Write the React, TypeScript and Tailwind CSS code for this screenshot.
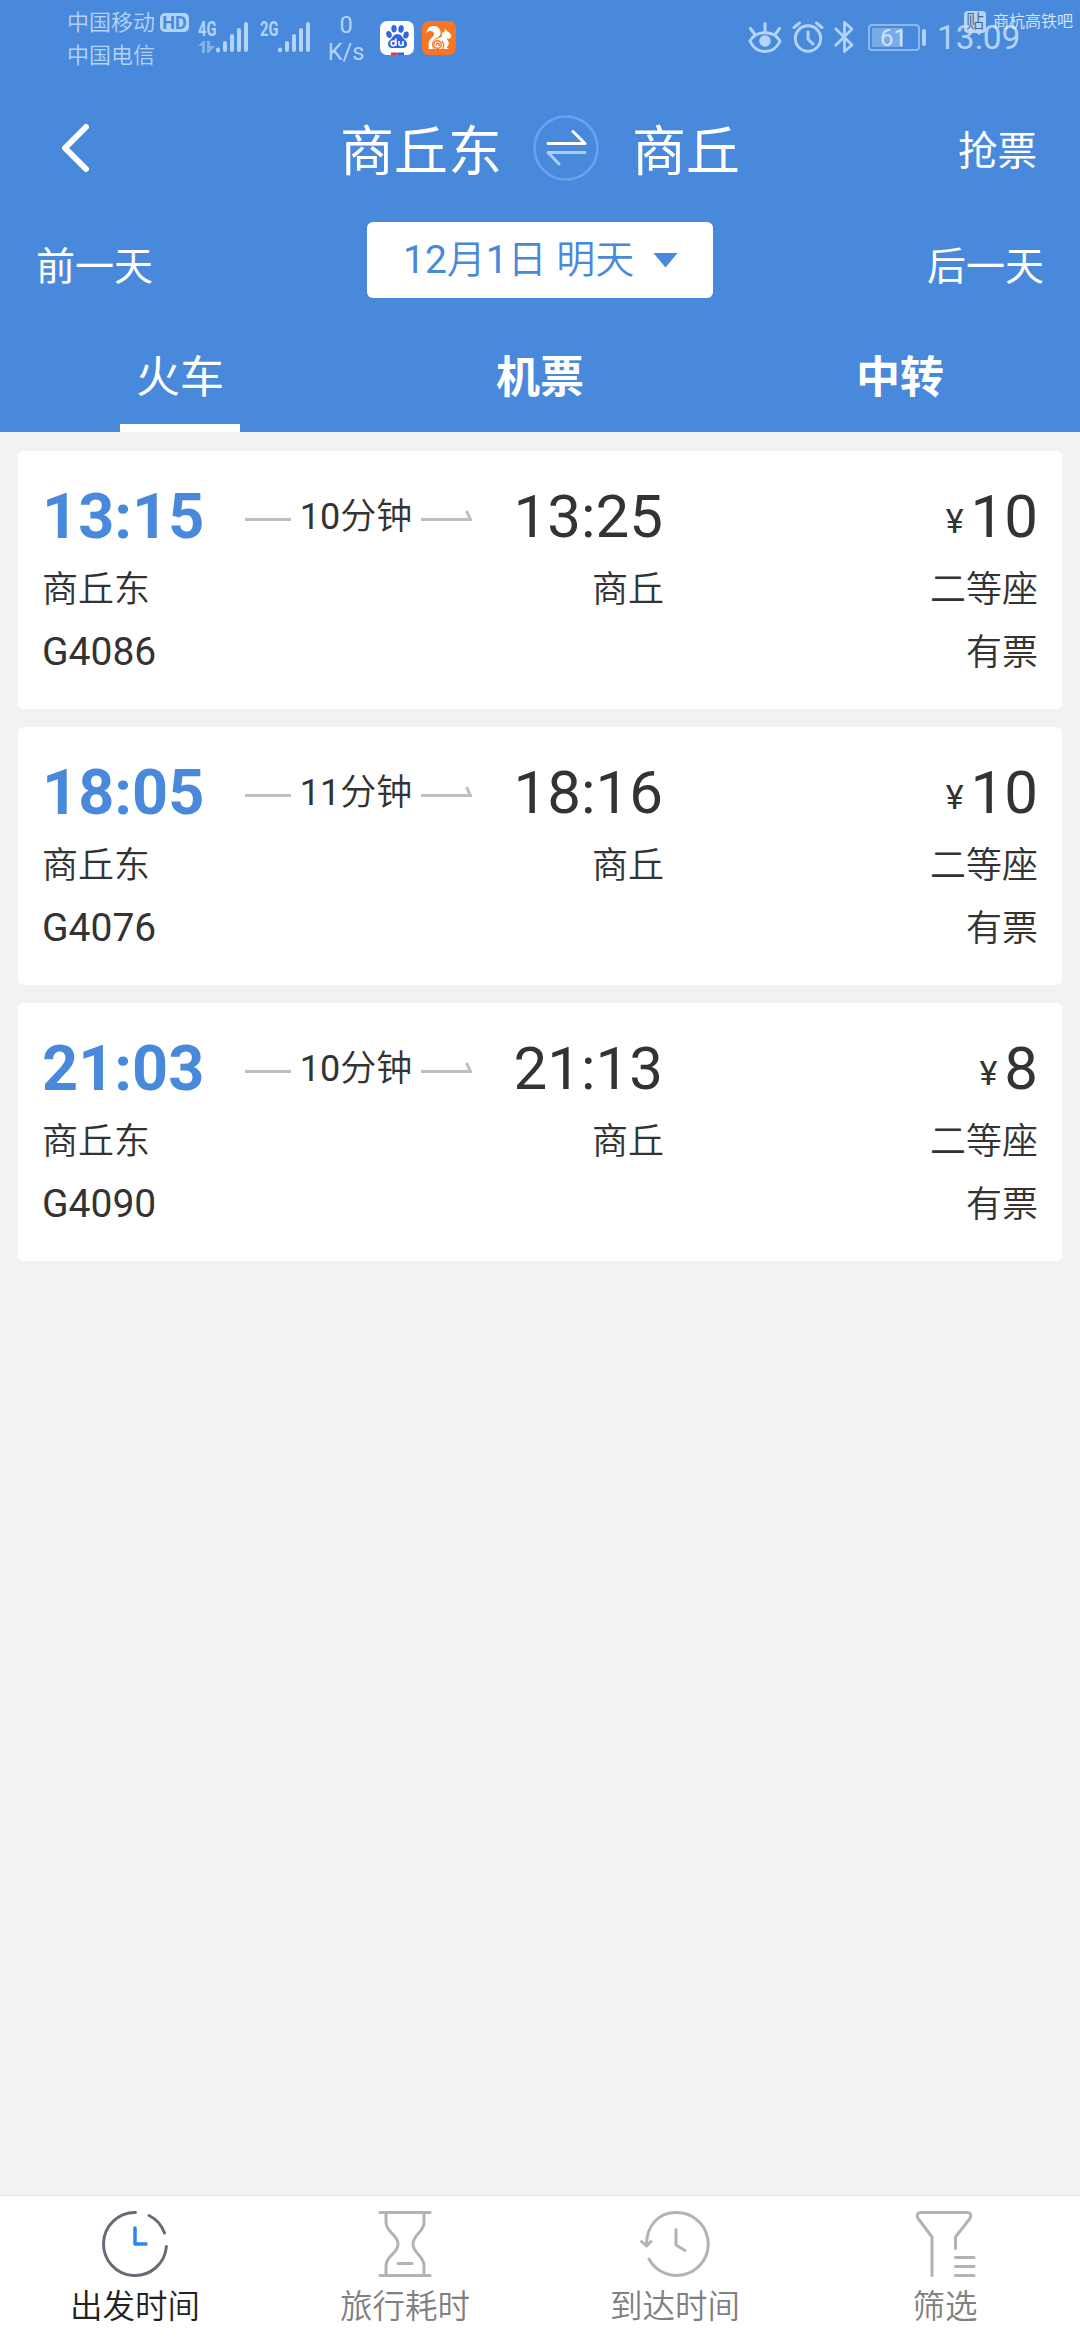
import React from "react";

const trains = [
  { dep: "13:15", arr: "13:25", mins: "10", no: "G4086", price: "10" },
  { dep: "18:05", arr: "18:16", mins: "11", no: "G4076", price: "10" },
  { dep: "21:03", arr: "21:13", mins: "10", no: "G4090", price: "8" },
];

function SignalBars() {
  return (
    <svg width="34" height="32" viewBox="0 0 34 32" stroke="#b4d3f8" strokeWidth="4" strokeLinecap="round">
      <path d="M3 28.500V29.500M10 22V29M17 15V29M24 9V29M31 3V29" />
    </svg>
  );
}

function StatusBar() {
  return (
    <div className="relative flex h-[80px] text-[#b4d3f8]">
      <div className="ml-[67px] flex w-[88px] flex-col pt-[6px] text-[22px] leading-[33px]">
        <div>中国移动</div>
        <div>中国电信</div>
      </div>
      <div className="ml-[5px] mt-[13px] flex h-[19px] w-[29px] items-center justify-center rounded-[5px] bg-[#b4d3f8] text-[18px] font-bold leading-none text-[#4989db]">
        HD
      </div>
      <div className="ml-[9px] mt-[21px] w-[17px]">
        <div className="origin-left scale-x-70 text-[21px] font-bold leading-[17px]">4G</div>
        <svg className="mt-[3px]" width="18" height="12" viewBox="0 0 18 12" fill="#83b1ea">
          <path d="M0 5L5 0H7V12H4V5ZM9 0H12V5H17L11 12H9Z" />
        </svg>
      </div>
      <div className="mt-[21px] w-[34px]"><SignalBars /></div>
      <div className="ml-[11px] mt-[21px] w-[16px]">
        <div className="origin-left scale-x-70 text-[21px] font-bold leading-[17px]">2G</div>
      </div>
      <div className="ml-[1px] mt-[21px] w-[34px]"><SignalBars /></div>
      <div className="ml-[14px] flex w-[42px] flex-col items-center pt-[9px] text-[23.500px] font-normal leading-[32px]">
        <div className="h-[27px]">0</div>
        <div>K/s</div>
      </div>
      <svg className="ml-[13px] mt-[21px]" width="34" height="34" viewBox="0 0 34 34">
        <rect width="34" height="34" rx="7" fill="#fff" />
        <g fill="#3465e0">
          <ellipse cx="9" cy="13.500" rx="2.700" ry="3.600" transform="rotate(-15 9 13.500)" />
          <ellipse cx="14" cy="7.800" rx="2.700" ry="3.700" />
          <ellipse cx="21" cy="8" rx="2.700" ry="3.700" transform="rotate(10 21 8)" />
          <ellipse cx="26" cy="14" rx="2.700" ry="3.600" transform="rotate(15 26 14)" />
          <path d="M17.500 13C13.500 13 12.500 17 10 19C6.500 22 8 27 12 27H23C27.500 27 28.500 22 25 19C22.500 17 21.500 13 17.500 13Z" />
        </g>
        <g fill="none" stroke="#fff" strokeWidth="1.600">
          <circle cx="13.300" cy="22.300" r="2.300" />
          <path d="M15.800 17.500V25M19 20V23C19 25 23 25 23 22.500V20V25" />
        </g>
        <path d="M11 31.500H17.500V34H11Z" fill="#e33b44" />
        <path d="M17.500 31.500H24V34H17.500Z" fill="#3465e0" />
      </svg>
      <svg className="ml-[8px] mt-[21px]" width="34" height="34" viewBox="0 0 34 34">
        <rect width="34" height="34" rx="7" fill="#fa7421" />
        <g fill="#fff">
          <path d="M4.500 12C4.500 7 8.500 4.500 12.500 5C17 5.500 19 9 18.500 12.500C18 16 14 17.500 12 20C10 22.500 10 25 11.500 28H6C8 27 5.500 24 7 20.500C8.500 17 12.500 15.500 12 12.500C11.500 9.500 7 9 4.500 12Z" />
          <path d="M20 15C19 12 21 10.500 23 10.500L22.500 7.500L25.500 10.500C28.500 12 30 15 29 16.500C28 18 25.500 17.500 24.500 18C28 21 27 25 24.500 26.500L27 28H11C8.500 23 11 18.500 15.500 17.500C17.500 17 19 16.500 20 15Z" />
        </g>
        <g fill="none" stroke="#fa7421" strokeWidth="1.400">
          <circle cx="15.500" cy="23.500" r="3.800" />
          <path d="M14.500 24.500A1.500 1.500 0 1 1 16.500 25M20 20C22 22 22 25.500 20.500 28" />
          <path d="M12 28C8.500 23 11 18.500 15.500 17" strokeWidth="1" />
        </g>
      </svg>
      <svg className="ml-[291px] mt-[21px]" width="36" height="34" viewBox="0 0 36 34" fill="none" stroke="#b4d3f8" strokeWidth="3" strokeLinecap="round">
        <path d="M3 20C9 9 27 9 33 20C27 34 9 34 3 20Z" strokeLinejoin="round" />
        <circle cx="18" cy="20" r="5.800" fill="#b4d3f8" stroke="none" />
        <path d="M18 2.500V10M3.500 7.500L7.500 13M32.500 7.500L28.500 13" />
      </svg>
      <svg className="ml-[9px] mt-[21px]" width="32" height="34" viewBox="0 0 32 34" fill="none" stroke="#b4d3f8" strokeWidth="3" strokeLinecap="round" strokeLinejoin="round">
        <circle cx="16" cy="17.500" r="12.700" />
        <path d="M2 6.500L7.500 2M30 6.500L24.500 2M16 11V18L21 23" />
      </svg>
      <svg className="ml-[9px] mt-[20px]" width="22" height="34" viewBox="0 0 22 34" fill="none" stroke="#b4d3f8" strokeWidth="2.800" strokeLinejoin="round">
        <path d="M2 8L19 25L11.500 31.500V2.500L19 9L2 26" />
      </svg>
      <div className="ml-[13px] mt-[24px] flex h-[27px] w-[52px] rounded-[4px] border-2 border-[#8bb8ee] p-[2px]">
        <div className="relative h-[19px] w-[31px] bg-[#79abe9]">
          <span className="absolute left-[8px] top-0 text-[24px] font-normal leading-[20px] text-[#cfe4ff]">61</span>
        </div>
      </div>
      <div className="ml-[2px] mt-[29px] h-[17px] w-[4px] rounded-[2px] bg-[#b4d3f8]" />
      <div className="ml-[11px] mt-[18px] text-[33.500px] font-normal leading-[40px]">13:09</div>
      <div className="absolute left-[964px] top-[11px] flex items-center text-white/80">
        <div className="flex h-[22px] w-[22px] items-center justify-center rounded-[4px] bg-[#c3dbf8]/90 text-[18px] leading-none text-[#44698f]">贴</div>
        <div className="ml-[7px] text-[16px] leading-[22px]">商杭高铁吧</div>
      </div>
    </div>
  );
}

function Header() {
  return (
    <header className="h-[432px] bg-[#4989db] text-white">
      <StatusBar />
      <div className="flex h-[136px] items-center">
        <svg className="ml-[60px]" width="32" height="50" viewBox="0 0 32 50" fill="none" stroke="#fff" strokeWidth="6" strokeLinecap="round" strokeLinejoin="round">
          <path d="M26 4L5 25L26 46" />
        </svg>
        <div className="ml-[248px] mt-[9px] w-[162px] text-[54px] font-normal leading-[60px]">商丘东</div>
        <svg className="ml-[31px]" width="66" height="66" viewBox="0 0 66 66" fill="none" strokeWidth="3" strokeLinecap="round" strokeLinejoin="round">
          <circle cx="33" cy="33" r="31.500" stroke="#6ba3ea" strokeWidth="2.500" />
          <path d="M15 28.500H52L40 16.500" stroke="#fff" />
          <path d="M52 37.500H15L26 49" stroke="#a9cdfa" />
        </svg>
        <div className="ml-[33px] mt-[9px] w-[110px] text-[54px] font-normal leading-[60px]">商丘</div>
        <div className="ml-auto mr-[43px] mt-[7px] text-[39.500px] font-normal leading-[50px]">抢票</div>
      </div>
      <div className="flex h-[88px] justify-between px-[36px] pt-[6px]">
        <div className="mt-[20px] w-[120px] text-[39px] font-normal leading-[50px]">前一天</div>
        <div className="flex h-[76px] w-[346px] items-center rounded-[6px] bg-white pl-[36px] text-[#4989db]">
          <div className="w-[233px] whitespace-nowrap text-[39px] leading-[50px]">
            <span className="font-normal">12</span>月<span className="font-normal">1</span>日 明天
          </div>
          <div className="ml-[17px] h-[15px] w-[25px] bg-[#4989db] [clip-path:polygon(0_0,100%_0,50%_100%)]" />
        </div>
        <div className="mt-[20px] w-[120px] text-right text-[39px] font-normal leading-[50px]">后一天</div>
      </div>
      <nav className="grid h-[128px] grid-cols-3 text-center text-[44px] leading-[60px]">
        <div className="flex flex-col items-center justify-between pt-[44px]">
          <span className="font-normal">火车</span>
          <span className="h-[8px] w-[120px] bg-white" />
        </div>
        <div className="pt-[44px] font-bold">机票</div>
        <div className="pt-[44px] font-bold">中转</div>
      </nav>
    </header>
  );
}

function TrainCard({ t }: { t: (typeof trains)[number] }) {
  return (
    <article className="h-[258px] rounded-[6px] bg-white px-[24px] pt-[31px] text-[36px] text-[#333]">
      <div className="flex h-[70px] items-center">
        <div className="w-[166px] text-[63px] font-bold leading-[70px] text-[#4989db]">{t.dep}</div>
        <div className="ml-[37px] mt-[5px] h-[3px] w-[46px] bg-[#bfbfbf]" />
        <div className="w-[130px] whitespace-nowrap text-center leading-[60px]">
          <span className="font-normal">{t.mins}</span>分钟
        </div>
        <svg className="mb-[6px]" width="51" height="13" viewBox="0 0 51 13" fill="none" stroke="#bfbfbf" strokeWidth="3">
          <path d="M0 11.500H49.500L45.500 3" />
        </svg>
        <div className="w-[191px] text-right text-[60px] font-normal leading-[70px]">{t.arr}</div>
        <div className="ml-auto flex items-baseline font-normal">
          <span className="relative -top-[4px] mr-[7px] text-[34px]">¥</span>
          <span className="text-[60px] leading-[70px]">{t.price}</span>
        </div>
      </div>
      <div className="mt-[7px] flex h-[62px] items-center leading-[50px]">
        <div className="w-[300px]">商丘东</div>
        <div className="w-[322px] text-right">商丘</div>
        <div className="ml-auto">二等座</div>
      </div>
      <div className="flex h-[64px] items-center justify-between leading-[50px]">
        <div className="-mt-[2px] text-[39px] font-normal">{t.no}</div>
        <div>有票</div>
      </div>
    </article>
  );
}

function NavItem({ label, active, children }: { label: string; active?: boolean; children: React.ReactNode }) {
  return (
    <div className="flex flex-col items-center pt-[12px]">
      <svg width="72" height="72" viewBox="0 0 72 72" fill="none" stroke={active ? "#676b78" : "#b3b3b3"} strokeWidth="3" strokeLinecap="round" strokeLinejoin="round">
        {children}
      </svg>
      <div className={active ? "mt-[7px] text-[32.500px] leading-[40px] text-[#222]" : "mt-[7px] text-[32.500px] leading-[40px] text-[#808080]"}>
        {label}
      </div>
    </div>
  );
}

export default function App() {
  return (
    <div className="flex h-[2340px] w-[1080px] flex-col overflow-hidden bg-[#f2f2f2] font-[350] [font-family:Roboto,'Noto_Sans_CJK_SC',sans-serif]">
      <Header />
      <main className="flex flex-1 flex-col gap-[18px] px-[18px] pt-[19px]">
        {trains.map((t) => (
          <TrainCard key={t.no} t={t} />
        ))}
      </main>
      <footer className="grid h-[145px] grid-cols-4 border-t border-[#e4e4e4] bg-white">
        <NavItem label="出发时间" active>
          <path d="M36.500 4.500A31.500 31.500 0 1 0 67.400 38.500M50 7.500A31.500 31.500 0 0 1 65.500 25" />
          <path d="M36 20V36H47" stroke="#2a86f0" strokeWidth="3.500" />
        </NavItem>
        <NavItem label="旅行耗时">
          <path d="M11 4.500H61M11 67.500H61M17 4.500V14C17 25 29 26 29 36C29 46 17 47 17 58V67.500M55 4.500V14C55 25 44 26 44 36C44 46 55 47 55 58V67.500M29 55.500H43" />
        </NavItem>
        <NavItem label="到达时间">
          <path d="M2.500 33.500L7.500 38L12 33.500M7.500 37C7.500 17 20 4.500 37 4.500A31.500 31.500 0 1 1 10 51M37 21.500V37L46 42.500" />
        </NavItem>
        <NavItem label="筛选">
          <path d="M23 67.500V29L9.500 11C7 8 8 4.500 12 4.500H58C62 4.500 63 8 60.500 11L46.500 29V40.500M46.500 49.500H65M46.500 58.500H65M46.500 67.500H65" />
        </NavItem>
      </footer>
    </div>
  );
}
